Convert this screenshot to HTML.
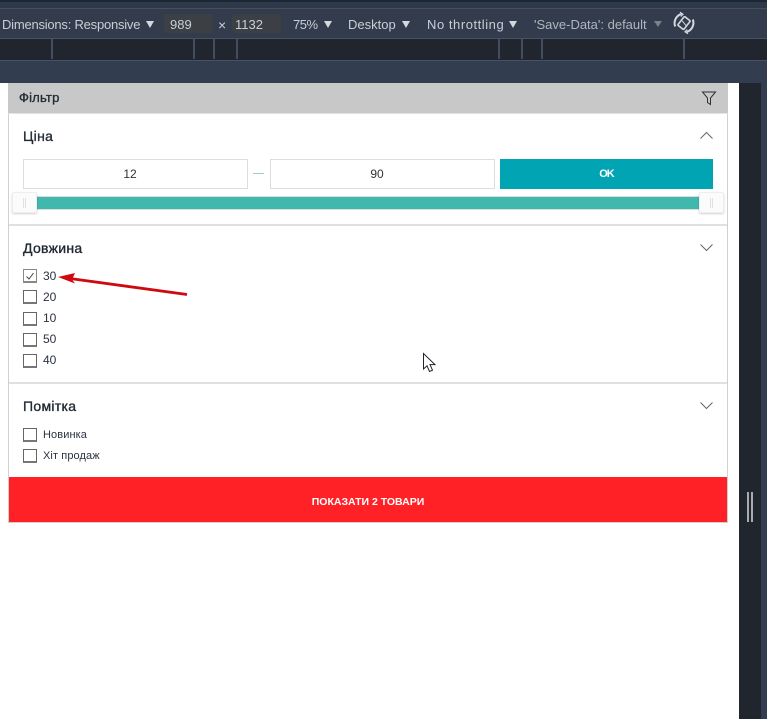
<!DOCTYPE html>
<html>
<head>
<meta charset="utf-8">
<style>
html,body{margin:0;padding:0;width:767px;height:719px;overflow:hidden;background:#fff;font-family:"Liberation Sans","DejaVu Sans",sans-serif}
.a{position:absolute}
.t{position:absolute;white-space:nowrap;line-height:16px}
.dt{color:#c9ced6;font-size:13px;top:17px}
.tri{position:absolute;width:0;height:0;border-left:4.5px solid transparent;border-right:4.5px solid transparent;border-top:7px solid #d4d8de;top:21px}
.rl{position:absolute;top:39px;width:2px;height:20px;background:#424e60}
.cb{position:absolute;left:23px;width:12px;height:11px;border:1px solid #666;border-bottom-width:2px;border-bottom-color:#777;background:#fff;box-sizing:content-box}
.l{position:absolute;left:43px;font-size:12px;line-height:14px;color:#2a3340;white-space:nowrap}
.w{font-size:11px;letter-spacing:.1px}
.h{position:absolute;left:23px;font-size:14px;color:#222a33;line-height:16px;letter-spacing:.3px;-webkit-text-stroke:.35px #222a33}
.inp{position:absolute;top:159px;height:30px;box-sizing:border-box;border:1px solid #ddd;background:#fff;text-align:center;font-size:12px;line-height:28px;color:#333;padding-right:11px}
.th{position:absolute;top:192px;width:25px;height:21px;box-sizing:border-box;background:#fbfbfb;border:1px solid #eee;border-radius:2px;box-shadow:0 1px 2px rgba(0,0,0,.18)}
.th i{position:absolute;left:10px;top:5px;width:1px;height:10px;background:#e0e0e0;box-shadow:2px 0 0 #e0e0e0}
</style>
</head>
<body>
<!-- DevTools chrome -->
<div class="a" style="left:0;top:0;width:767px;height:2px;background:#1c2736"></div>
<div class="a" style="left:0;top:2px;width:767px;height:6px;background:#2d3949"></div>
<div class="a" style="left:0;top:8px;width:767px;height:1px;background:#474f5a"></div>
<div class="a" style="left:0;top:9px;width:767px;height:29px;background:#323c4c"></div>
<div class="a" style="left:0;top:38px;width:767px;height:1px;background:#465265"></div>
<div class="a" style="left:0;top:39px;width:767px;height:21px;background:#21262e"></div>
<div class="a" style="left:0;top:60px;width:767px;height:1px;background:#465265"></div>
<div class="a" style="left:0;top:61px;width:767px;height:22px;background:#323e50"></div>
<div class="a" style="left:739px;top:83px;width:22px;height:636px;background:#21262e"></div>
<div class="a" style="left:761px;top:83px;width:6px;height:636px;background:#323e50"></div>

<div class="t dt" style="left:2px;letter-spacing:-.22px">Dimensions: Responsive</div>
<div class="tri" style="left:146px"></div>
<div class="a" style="left:164px;top:14px;width:49px;height:19px;background:#3c4045;border-radius:3px"></div>
<div class="t dt" style="left:170px">989</div>
<div class="t" style="left:218px;top:17px;color:#c9ced6;font-size:14px">×</div>
<div class="a" style="left:232px;top:14px;width:49px;height:19px;background:#3c4045;border-radius:3px"></div>
<div class="t dt" style="left:235px">1132</div>
<div class="t dt" style="left:293px;letter-spacing:-.5px">75%</div>
<div class="tri" style="left:324px"></div>
<div class="t dt" style="left:348px">Desktop</div>
<div class="tri" style="left:402px"></div>
<div class="t dt" style="left:427px;letter-spacing:.55px">No throttling</div>
<div class="tri" style="left:509px"></div>
<div class="t dt" style="left:534px;color:#b0b6bf">'Save-Data': default</div>
<div class="tri" style="left:654px;border-top-color:#7b818a;border-top-width:6px"></div>
<svg class="a" style="left:672px;top:11px" width="24" height="24" viewBox="0 0 24 24" fill="none" stroke="#d4d8de">
  <rect x="8.2" y="6.5" width="7.6" height="11" rx="1" stroke-width="1.6" transform="rotate(38 12 12)"/>
  <path d="M10.2 9.8L14 14.6" stroke-width="1"/>
  <path d="M3.2 15.5A9.5 9.5 0 0 1 9.5 3M20.8 8.5A9.5 9.5 0 0 1 14.5 21" stroke-width="2"/>
  <path d="M8 1.2L11 3.2L8.8 5.5M16 22.8L13 20.8L15.2 18.5" stroke-width="1.2"/>
</svg>

<div class="rl" style="left:51px"></div>
<div class="rl" style="left:193px"></div>
<div class="rl" style="left:213px"></div>
<div class="rl" style="left:236px"></div>
<div class="rl" style="left:498px"></div>
<div class="rl" style="left:521px"></div>
<div class="rl" style="left:541px"></div>
<div class="rl" style="left:683px"></div>

<!-- Panel -->
<div class="a" style="left:8px;top:83px;width:720px;height:440px;box-sizing:border-box;border:1px solid #d0d0d0;border-top:none;background:#fff"></div>
<div class="a" style="left:8px;top:83px;width:720px;height:30px;background:#c8c8c8"></div>
<div class="a" style="left:8px;top:113px;width:720px;height:1px;background:#e2e2e2"></div>
<div class="t" style="left:19px;top:90px;font-size:13px;color:#252c36;-webkit-text-stroke:.35px #252c36;letter-spacing:.2px">Фільтр</div>
<svg class="a" style="left:701px;top:91px" width="16" height="15" viewBox="0 0 16 15" fill="none" stroke="#2a2f36" stroke-width="1">
  <path d="M1.5 1H14.5L9.5 7V13.5L6.5 11.5V7Z"/>
</svg>

<div class="h" style="top:128px">Ціна</div>
<svg class="a" style="left:700px;top:131px" width="13" height="9" viewBox="0 0 13 9" fill="none" stroke="#666" stroke-width="1"><path d="M.5 7.5L6.5 1.5L12.5 7.5"/></svg>
<div class="inp" style="left:23px;width:225px">12</div>
<div class="a" style="left:253px;top:173px;width:11px;height:1px;background:#a9c9c6"></div>
<div class="inp" style="left:270px;width:225px">90</div>
<div class="a" style="left:500px;top:159px;width:213px;height:30px;background:#00a4b3;color:#fff;text-align:center;font-size:11px;font-weight:bold;line-height:30px;letter-spacing:-1px">OK</div>
<div class="a" style="left:23px;top:196px;width:690px;height:14px;box-sizing:border-box;background:#41b8ae;border-top:1px solid #dcdcdc;border-bottom:1px solid #dcdcdc"></div>
<div class="th" style="left:12px"><i></i></div>
<div class="th" style="left:699px"><i></i></div>
<div class="a" style="left:9px;top:224px;width:718px;height:2px;background:#e0e0e0"></div>

<div class="h" style="top:240px">Довжина</div>
<svg class="a" style="left:700px;top:243px" width="13" height="9" viewBox="0 0 13 9" fill="none" stroke="#666" stroke-width="1"><path d="M.5 1.5L6.5 7.5L12.5 1.5"/></svg>
<div class="cb" style="top:269px;border-color:#888"></div>
<svg class="a" style="left:23px;top:269px" width="14" height="14" viewBox="0 0 14 14" fill="none" stroke="#444" stroke-width="1"><path d="M3.5 7.5L6 10L10.5 4"/></svg>
<div class="l" style="top:269px">30</div>
<div class="cb" style="top:290px"></div><div class="l" style="top:290px">20</div>
<div class="cb" style="top:312px"></div><div class="l" style="top:311px">10</div>
<div class="cb" style="top:333px"></div><div class="l" style="top:332px">50</div>
<div class="cb" style="top:354px"></div><div class="l" style="top:353px">40</div>
<svg class="a" style="left:55px;top:268px" width="135" height="32" viewBox="0 0 135 32" fill="none">
  <path d="M15 10.5L132 26.5" stroke="#d0080f" stroke-width="2.8"/>
  <path d="M3 9L20 5L17 11.5L20 15.5Z" fill="#d0080f"/>
</svg>
<svg class="a" style="left:421px;top:352px" width="16" height="22" viewBox="0 0 16 22"><path d="M2.5 1.5V17L6 13.8L8.5 19.5L11.5 18.2L9 12.6H14Z" fill="#fff" stroke="#20252c" stroke-width="1"/></svg>

<div class="a" style="left:9px;top:382px;width:718px;height:2px;background:#e0e0e0"></div>

<div class="h" style="top:398px">Помітка</div>
<svg class="a" style="left:700px;top:401px" width="13" height="9" viewBox="0 0 13 9" fill="none" stroke="#666" stroke-width="1"><path d="M.5 1.5L6.5 7.5L12.5 1.5"/></svg>
<div class="cb" style="top:428px"></div><div class="l w" style="top:428px">Новинка</div>
<div class="cb" style="top:449px"></div><div class="l w" style="top:449px">Хіт продаж</div>

<div class="a" style="left:9px;top:477px;width:718px;height:45px;background:#ff2126;color:#fff;text-align:center;font-size:10.5px;font-weight:bold;line-height:50px">ПОКАЗАТИ 2 ТОВАРИ</div>

<div class="a" style="left:747px;top:492px;width:2px;height:30px;background:#a8abb0"></div>
<div class="a" style="left:751px;top:492px;width:2px;height:30px;background:#a8abb0"></div>
</body>
</html>
